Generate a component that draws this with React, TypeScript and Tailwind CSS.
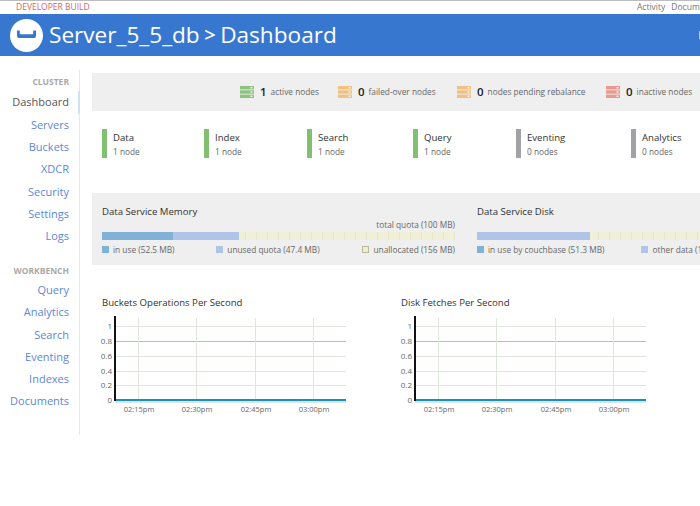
import React from 'react';

const clusterLinks = ['Servers', 'Buckets', 'XDCR', 'Security', 'Settings', 'Logs'];
const workbenchLinks = ['Query', 'Analytics', 'Search', 'Eventing', 'Indexes', 'Documents'];

const nodeStats = [
  { count: 1, label: 'active nodes', color: '#8cc47f', width: 'w-[98px]' },
  { count: 0, label: 'failed-over nodes', color: '#f0c080', width: 'w-[119px]' },
  { count: 0, label: 'nodes pending rebalance', color: '#f0c080', width: 'w-[149px]' },
  { count: 0, label: 'inactive nodes', color: '#e89a90', width: 'w-[86px]' },
];

const services = [
  { name: 'Data', nodes: '1 node', on: true, width: 'w-[102px]' },
  { name: 'Index', nodes: '1 node', on: true, width: 'w-[103px]' },
  { name: 'Search', nodes: '1 node', on: true, width: 'w-[106px]' },
  { name: 'Query', nodes: '1 node', on: true, width: 'w-[103px]' },
  { name: 'Eventing', nodes: '0 nodes', on: false, width: 'w-[115px]' },
  { name: 'Analytics', nodes: '0 nodes', on: false, width: 'w-[100px]' },
];

const ServerIcon: React.FC<{ color: string }> = ({ color }) => (
  <svg width="14" height="12" viewBox="0 0 14 12" className="shrink-0">
    {[0, 4.3, 8.6].map(y => (
      <g key={y}>
        <rect x="0" y={y} width="14" height="3.4" fill={color} />
        <rect x="10.5" y={y + 1} width="2" height="1.4" fill="#ffffff" opacity="0.85" />
      </g>
    ))}
  </svg>
);

const Swatch: React.FC<{ className: string }> = ({ className }) => (
  <span className={`inline-block w-[7px] h-[7px] mr-[4px] shrink-0 border ${className}`} />
);

const Chart: React.FC = () => {
  const rows = [
    { label: '1', y: 10 },
    { label: '0.8', y: 25, dark: true },
    { label: '0.6', y: 40 },
    { label: '0.4', y: 55 },
    { label: '0.2', y: 69 },
    { label: '0', y: 84 },
  ];
  const ticks = [
    { label: '02:15pm', x: 36 },
    { label: '02:30pm', x: 94 },
    { label: '02:45pm', x: 153 },
    { label: '03:00pm', x: 211 },
  ];
  return (
    <svg width="250" height="100" viewBox="0 0 250 100" className="block overflow-visible">
      {rows.slice(0, 5).map(r => (
        <line key={r.y} x1="13" x2="244" y1={r.y + 0.5} y2={r.y + 0.5} stroke={r.dark ? '#b9bdb9' : '#dfe6dd'} />
      ))}
      {ticks.map(t => (
        <line key={t.x} x1={t.x + 0.5} x2={t.x + 0.5} y1="2" y2="84" stroke="#dfe6dd" />
      ))}
      {rows.map(r => (
        <text key={r.label} x="10" y={r.y + 3} textAnchor="end" fontSize="8" fill="#666666" fontFamily="Open Sans">
          {r.label}
        </text>
      ))}
      {ticks.map(t => (
        <text key={t.x} x={t.x + 1} y="96" textAnchor="middle" fontSize="7.5" fill="#666666" fontFamily="Open Sans">
          {t.label}
        </text>
      ))}
      <rect x="13" y="85" width="231" height="2" fill="#dbe5dc" />
      <rect x="13" y="83" width="231" height="2" fill="#1a8fc4" />
      <rect x="12" y="0" width="2" height="85" fill="#111111" />
    </svg>
  );
};

const App: React.FC = () => {
  return (
    <div className="w-[700px] h-[506px] overflow-hidden bg-white text-[#444] font-['Open_Sans',sans-serif]">
      <div className="h-[14px] border-t border-[#bdbdbd] flex justify-between items-center pl-[16px] overflow-hidden">
        <span className="text-[8.5px] text-[#d9665c] leading-none">DEVELOPER BUILD</span>
        <div className="flex gap-[6px] text-[8.5px] text-[#777] whitespace-nowrap w-[63px] shrink-0 leading-none">
          <span>Activity</span>
          <span>Documentation</span>
        </div>
      </div>

      <header className="h-[42px] bg-[#3877cf] flex items-center pl-[10px] text-white">
        <svg width="33" height="33" viewBox="0 0 33 33" className="shrink-0">
          <circle cx="16.5" cy="16.5" r="16.5" fill="#ffffff" />
          <path
            d="M7 11.500h2.800v3a0.800 0.800 0 0 0 0.800 0.800h11.800a0.800 0.800 0 0 0 0.800-0.800v-3h2.800v5.500a2 2 0 0 1-2 2h-15a2 2 0 0 1-2-2z"
            fill="#3877cf"
          />
        </svg>
        <h1 className="ml-[6px] text-[22.6px] leading-none whitespace-nowrap flex items-center">
          <span>Server_5_5_db</span>
          <span className="mx-[4.5px] text-[20px] font-semibold">&gt;</span>
          <span>Dashboard</span>
        </h1>
        <div className="ml-auto w-px h-[8px] bg-[#9fd0f0]" />
      </header>

      <div className="flex pt-[14px]">
        <nav className="w-[80px] h-[365px] shrink-0 border-r border-[#e8e8e8] text-right text-[#5b88d8] text-[11px] pt-[6px]">
          <div className="pr-[10px] text-[8.5px] font-bold text-[#aaaaaa] h-[12px] leading-[12px]">CLUSTER</div>
          <div className="h-[23px] mt-[3px] leading-[22px] pr-[9px] text-[#555] border-r-[2px] border-[#cfe3f2] -mr-px">Dashboard</div>
          {clusterLinks.map(link => (
            <div key={link} className="h-[22.2px] leading-[22.2px] pr-[10px]">{link}</div>
          ))}
          <div className="pr-[10px] text-[8.5px] font-bold text-[#aaaaaa] h-[12px] leading-[12px] mt-[18px]">WORKBENCH</div>
          <div className="mt-[2px]">
            {workbenchLinks.map(link => (
              <div key={link} className="h-[22.2px] leading-[22.2px] pr-[10px]">{link}</div>
            ))}
          </div>
        </nav>

        <main className="ml-[12px] flex-1 min-w-0 pt-[3px]">
          <section className="h-[38px] bg-[#efefef] flex items-center justify-end pr-[8px] whitespace-nowrap">
            {nodeStats.map(stat => (
              <div key={stat.label} className={`flex items-center shrink-0 ${stat.width}`}>
                <ServerIcon color={stat.color} />
                <span className="ml-[6px] text-[11.5px] font-semibold text-[#222]">{stat.count}</span>
                <span className="ml-[4px] text-[8.3px] text-[#666]">{stat.label}</span>
              </div>
            ))}
          </section>

          <section className="flex mt-[18px] pl-[10px] h-[29px]">
            {services.map(svc => (
              <div key={svc.name} className={`flex shrink-0 ${svc.width}`}>
                <div className={`w-[5px] h-[29px] ${svc.on ? 'bg-[#80c070]' : 'bg-[#a2a2a6]'}`} />
                <div className="ml-[6px]">
                  <div className="text-[9.6px] leading-[13px] mt-[2px] text-[#333]">{svc.name}</div>
                  <div className="text-[8.3px] leading-[13px] mt-px text-[#666]">{svc.nodes}</div>
                </div>
              </div>
            ))}
          </section>

          <section className="h-[72px] mt-[35px] bg-[#efefef] flex pl-[10px] pt-[12px] overflow-hidden">
            <div className="w-[353px] shrink-0">
              <div className="text-[9.6px] leading-[13px] text-[#333]">Data Service Memory</div>
              <div className="text-right text-[8.3px] leading-[11px] mt-[1px] text-[#666]">total quota (100 MB)</div>
              <div className="flex h-[8px] mt-[2px] bg-[#f0f0d8] bg-[repeating-linear-gradient(90deg,#e6e6cc_0,#e6e6cc_1px,transparent_1px,transparent_11px)]">
                <div className="w-[71px] bg-[#7fb2d6]" />
                <div className="w-[66px] bg-[#b0c4e8]" />
              </div>
              <div className="flex justify-between text-[8.3px] leading-[11px] mt-[4px] text-[#666]">
                <span className="flex items-center"><Swatch className="bg-[#7fb2d6] border-[#7fb2d6]" />in use (52.5 MB)</span>
                <span className="flex items-center -ml-px"><Swatch className="bg-[#b0c4e8] border-[#b0c4e8]" />unused quota (47.4 MB)</span>
                <span className="flex items-center"><Swatch className="bg-[#eeeed4] border-[#b9b99c]" />unallocated (156 MB)</span>
              </div>
            </div>
            <div className="w-[353px] shrink-0 ml-[22px]">
              <div className="text-[9.6px] leading-[13px] text-[#333]">Data Service Disk</div>
              <div className="flex h-[8px] mt-[14px] bg-[#f0f0d8] bg-[repeating-linear-gradient(90deg,#e6e6cc_0,#e6e6cc_1px,transparent_1px,transparent_11px)]">
                <div className="w-[113px] bg-[#b0c4e8]" />
              </div>
              <div className="flex text-[8.3px] leading-[11px] mt-[4px] text-[#666] whitespace-nowrap">
                <span className="flex items-center"><Swatch className="bg-[#7fb2d6] border-[#7fb2d6]" />in use by couchbase (51.3 MB)</span>
                <span className="flex items-center ml-[37px]"><Swatch className="bg-[#b0c4e8] border-[#b0c4e8]" />other data (1.2 GB)</span>
              </div>
            </div>
          </section>

          <section className="flex mt-[31px]">
            <div className="w-[300px] shrink-0">
              <h2 className="ml-[10px] text-[9.6px] leading-[13px] text-[#333]">Buckets Operations Per Second</h2>
              <div className="mt-[7px] ml-[10px]"><Chart /></div>
            </div>
            <div className="w-[300px] shrink-0">
              <h2 className="ml-[9px] text-[9.6px] leading-[13px] text-[#333]">Disk Fetches Per Second</h2>
              <div className="mt-[7px] ml-[10px]"><Chart /></div>
            </div>
          </section>
        </main>
      </div>
    </div>
  );
};

export default App;
